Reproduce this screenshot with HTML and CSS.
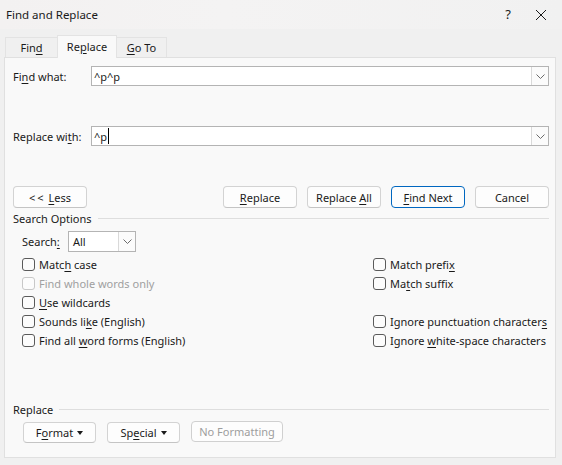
FILE: index.html
```html
<!DOCTYPE html>
<html lang="en">
<head>
<meta charset="utf-8">
<title>Find and Replace</title>
<link rel="stylesheet" href="styles.css">
</head>
<body>
<div class="window">
  <header class="titlebar">
    <span class="title">Find and Replace</span>
    <div class="controls">
      <span class="help">?</span>
      <svg class="close" width="12" height="12" viewBox="0 0 12 12"><path d="M1 1 L11 11 M11 1 L1 11" stroke="#1a1a1a" stroke-width="1" fill="none"/></svg>
    </div>
  </header>

  <nav class="tabs">
    <div class="tab find"><span>Fin<u>d</u></span></div>
    <div class="tab active"><span>Re<u>p</u>lace</span></div>
    <div class="tab goto"><span><u>G</u>o To</span></div>
  </nav>

  <section class="panel">
    <div class="field-row">
      <label class="field-label"><span>Fi<u>n</u>d what:</span></label>
      <div class="combo">
        <span class="combo-value">^p^p</span>
        <span class="drop"><svg width="9" height="5" viewBox="0 0 9 5"><path d="M0.5 0.5 L4.5 4.5 L8.5 0.5" stroke="#6b6b6b" fill="none"/></svg></span>
      </div>
    </div>

    <div class="field-row replace-row">
      <label class="field-label"><span>Replace wi<u>t</u>h:</span></label>
      <div class="combo">
        <span class="combo-value"><span>^p</span><span class="caret"></span></span>
        <span class="drop"><svg width="9" height="5" viewBox="0 0 9 5"><path d="M0.5 0.5 L4.5 4.5 L8.5 0.5" stroke="#6b6b6b" fill="none"/></svg></span>
      </div>
    </div>

    <div class="actions">
      <button class="btn"><span><span class="chevrons">&lt;&lt;</span> <u>L</u>ess</span></button>
      <div class="action-group">
        <button class="btn"><span><u>R</u>eplace</span></button>
        <button class="btn"><span>Replace <u>A</u>ll</span></button>
        <button class="btn default"><span><u>F</u>ind Next</span></button>
        <button class="btn"><span>Cancel</span></button>
      </div>
    </div>

    <div class="group-title"><span>Search Options</span><span class="rule"></span></div>

    <div class="search-row">
      <label><span>Search<u>:</u></span></label>
      <div class="select">
        <span class="select-value">All</span>
        <span class="drop"><svg width="9" height="5" viewBox="0 0 9 5"><path d="M0.5 0.5 L4.5 4.5 L8.5 0.5" stroke="#6b6b6b" fill="none"/></svg></span>
      </div>
    </div>

    <div class="options">
      <div class="col">
        <label class="check"><span class="box"></span><span>Matc<u>h</u> case</span></label>
        <label class="check disabled"><span class="box"></span><span>Find whole words only</span></label>
        <label class="check"><span class="box"></span><span><u>U</u>se wildcards</span></label>
        <label class="check"><span class="box"></span><span>Sounds li<u>k</u>e (English)</span></label>
        <label class="check"><span class="box"></span><span>Find all <u>w</u>ord forms (English)</span></label>
      </div>
      <div class="col">
        <label class="check"><span class="box"></span><span>Match prefi<u>x</u></span></label>
        <label class="check"><span class="box"></span><span>Ma<u>t</u>ch suffix</span></label>
        <div class="check empty"></div>
        <label class="check"><span class="box"></span><span>Ignore punctuation character<u>s</u></span></label>
        <label class="check"><span class="box"></span><span>Ignore <u>w</u>hite-space characters</span></label>
      </div>
    </div>

    <div class="group-title replace-group"><span>Replace</span><span class="rule"></span></div>

    <div class="format-row">
      <button class="btn small"><span>F<u>o</u>rmat</span><span class="tri"></span></button>
      <button class="btn small"><span>Sp<u>e</u>cial</span><span class="tri"></span></button>
      <button class="btn small wide" disabled><span>No Formatting</span></button>
    </div>
  </section>
</div>
</body>
</html>
```

FILE: styles.css
```css
* { box-sizing: border-box; }

html, body {
  margin: 0;
  padding: 0;
}

body {
  width: 562px;
  height: 465px;
  background: #f0f0f0;
  font-family: "Noto Sans", "Segoe UI", sans-serif;
  font-size: 11px;
  line-height: 15px;
  color: #1a1a1a;
  overflow: hidden;
}

u { text-decoration-thickness: 1px; text-underline-offset: 2px; }

.window {
  height: 465px;
  display: flex;
  flex-direction: column;
}

/* title bar */
.titlebar {
  height: 29px;
  display: flex;
  align-items: center;
  justify-content: space-between;
  padding-left: 6px;
  background: linear-gradient(90deg, #f3f1f1 0%, #f4f3f3 40%, #f1f1f1 100%);
}
.title { font-size: 11.5px; }
.controls {
  display: flex;
  align-items: center;
  height: 100%;
}
.help {
  width: 46px;
  text-align: center;
  font-size: 13px;
  margin-right: 2px;
}
.close {
  margin-right: 15px;
  margin-left: 2px;
}

/* tabs */
.tabs {
  display: flex;
  align-items: flex-end;
  height: 22px;
  margin-top: 6px;
  padding-left: 5px;
  position: relative;
  z-index: 1;
}
.tab {
  height: 20px;
  padding: 0;
  display: flex;
  align-items: center;
  justify-content: center;
  background: #f0f0f0;
  border: 1px solid #e3e3e3;
  border-bottom: none;
}
.tab.find { width: 52px; border-right: none; }
.tab.goto { width: 50px; border-left: none; }
.tab.active {
  width: 60px;
  height: 23px;
  margin-bottom: -1px;
  padding-bottom: 2px;
  background: #f9f9f9;
}

/* panel */
.panel {
  margin: 0 6px 0 4px;
  height: 401px;
  background: #f9f9f9;
  border: 1px solid #e0e0e0;
  padding: 8px 6px 0 8px;
  display: flex;
  flex-direction: column;
}

.field-row {
  display: flex;
  align-items: center;
  height: 20px;
}
.replace-row { margin-top: 40px; }
.field-label { width: 78px; }

.combo {
  flex: 1;
  height: 20px;
  background: #fff;
  border: 1px solid #b4b4b4;
  display: flex;
  align-items: center;
  justify-content: space-between;
}
.combo-value {
  padding-left: 2px;
  display: flex;
  align-items: center;
}
.caret {
  display: inline-block;
  width: 1px;
  height: 16px;
  background: #000;
  margin-left: 1px;
}
.drop {
  width: 17px;
  height: 18px;
  border-left: 1px solid #d9d9d9;
  background: #fbfbfb;
  display: flex;
  align-items: center;
  justify-content: center;
}

/* buttons */
.btn {
  font: inherit;
  color: #1a1a1a;
  height: 22px;
  width: 74px;
  background: #fdfdfd;
  border: 1px solid #d3d3d3;
  border-bottom-color: #c4c4c4;
  border-radius: 4px;
  padding: 0;
  display: inline-flex;
  align-items: center;
  justify-content: center;
  white-space: pre;
}
.btn.default { border-color: #0067c0; }
.btn:disabled { color: #9d9d9d; border-color: #d0d0d0; }
.chevrons { letter-spacing: 2px; }

.actions {
  margin-top: 40px;
  display: flex;
  justify-content: space-between;
}
.action-group {
  display: flex;
  gap: 10px;
}

/* group headers */
.group-title {
  margin-top: 2px;
  height: 16px;
  display: flex;
  align-items: center;
}
.group-title .rule {
  flex: 1;
  height: 1px;
  background: #dedede;
  margin-left: 6px;
}

.search-row {
  margin-top: 5px;
  padding-left: 9px;
  display: flex;
  align-items: center;
  height: 21px;
}
.search-row label { width: 46px; }
.select {
  width: 68px;
  height: 21px;
  background: #fff;
  border: 1px solid #b4b4b4;
  display: flex;
  align-items: center;
  justify-content: space-between;
}
.select-value { padding-left: 4px; }
.select .drop { height: 19px; }

/* checkboxes */
.options {
  margin-top: 3px;
  padding-left: 9px;
  display: grid;
  grid-template-columns: 351px 1fr;
}
.check {
  height: 19px;
  display: flex;
  align-items: center;
  white-space: pre;
}
.box {
  width: 13px;
  height: 13px;
  border: 1px solid #5a5a5a;
  border-radius: 3px;
  background: #fcfcfc;
  margin-right: 4px;
  flex: none;
}
.check.disabled { color: #a0a0a0; }
.check.disabled .box { border-color: #c8c8c8; }

.replace-group { margin-top: 51px; }

.format-row {
  margin-top: 5px;
  padding-left: 10px;
  display: flex;
  gap: 11px;
  align-items: flex-start;
}
.btn.small { height: 21px; width: 73px; }
.btn.wide { width: 92px; margin-top: -1px; }
.tri {
  width: 0;
  height: 0;
  border-top: 4px solid #1a1a1a;
  border-left: 3px solid transparent;
  border-right: 3px solid transparent;
  margin-left: 4px;
  margin-top: 1px;
}
```
